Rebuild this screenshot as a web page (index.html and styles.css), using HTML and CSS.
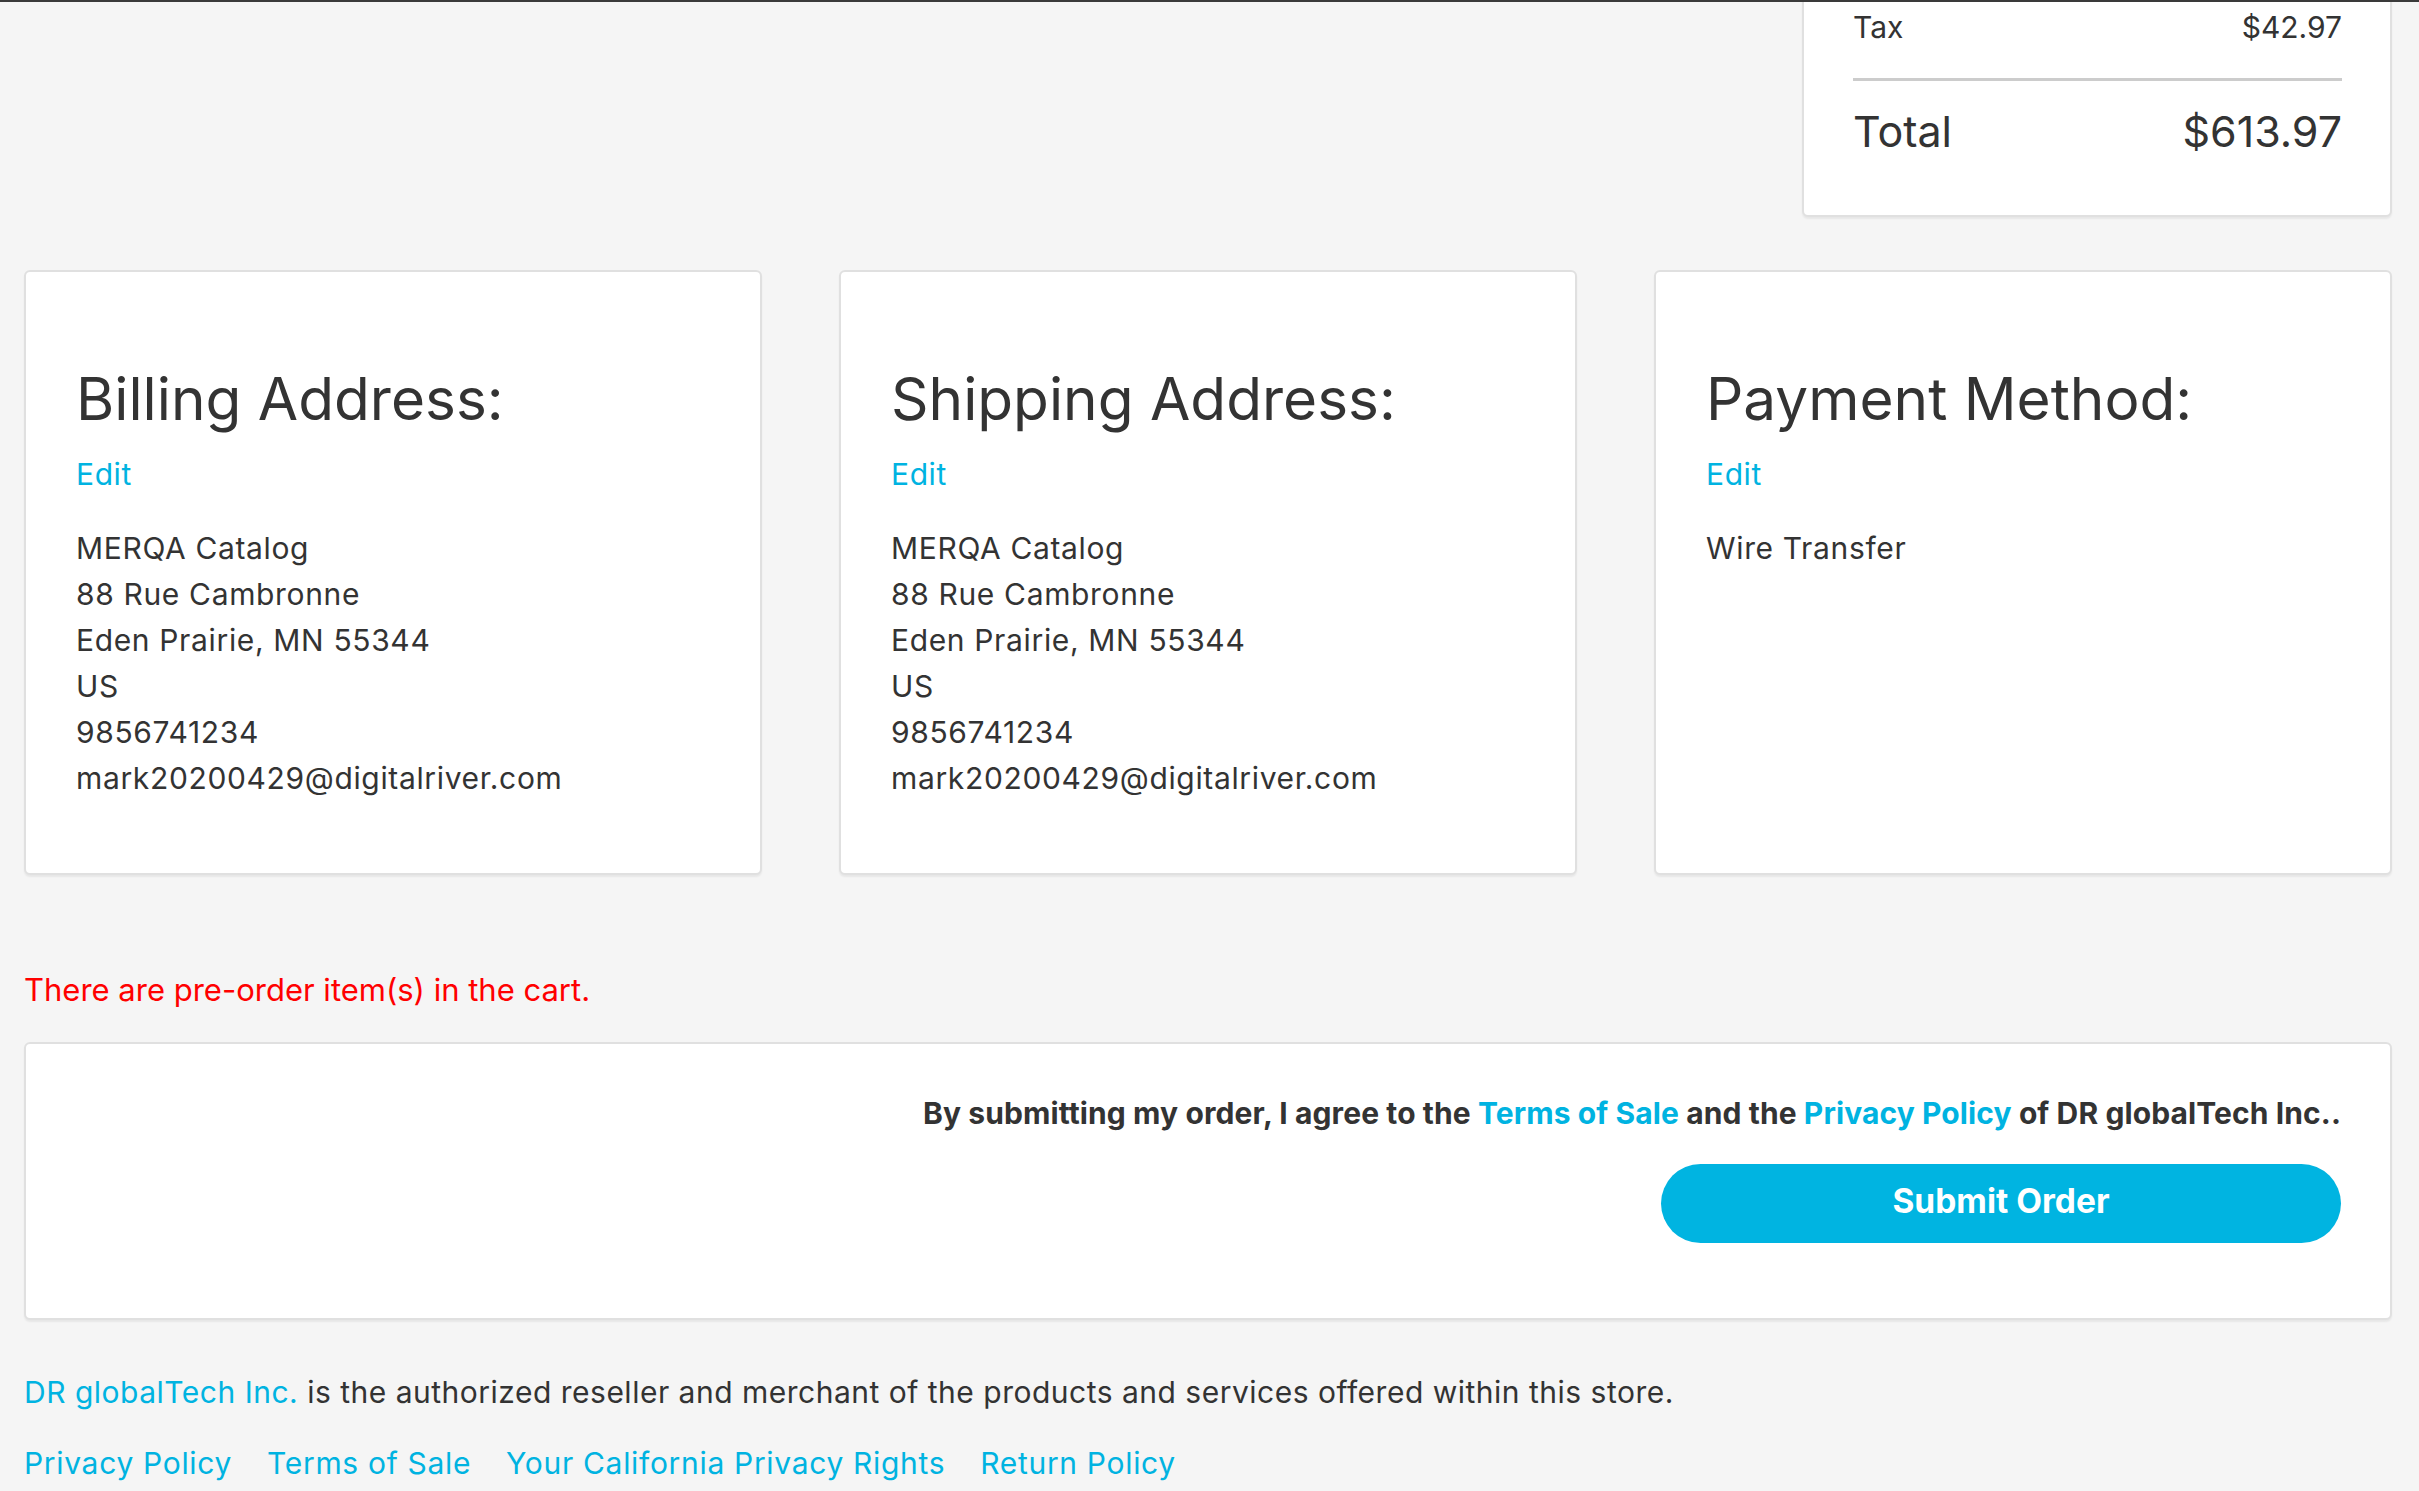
FILE: index.html
```html
<!DOCTYPE html>
<html lang="en">
<head>
<meta charset="utf-8">
<title>Review Order</title>
<link rel="stylesheet" href="styles.css">
</head>
<body>
<div class="topbar"></div>
<main class="page">
  <section class="summary">
    <div class="sum-row tax"><span>Tax</span><span>$42.97</span></div>
    <div class="sum-divider"></div>
    <div class="sum-row total"><span>Total</span><span>$613.97</span></div>
  </section>

  <section class="cards">
    <div class="card">
      <h2 class="card-title">Billing Address:</h2>
      <a class="edit" href="#">Edit</a>
      <div class="card-body">
        <div>MERQA Catalog</div>
        <div>88 Rue Cambronne</div>
        <div>Eden Prairie, MN 55344</div>
        <div>US</div>
        <div>9856741234</div>
        <div>mark20200429@digitalriver.com</div>
      </div>
    </div>
    <div class="card">
      <h2 class="card-title">Shipping Address:</h2>
      <a class="edit" href="#">Edit</a>
      <div class="card-body">
        <div>MERQA Catalog</div>
        <div>88 Rue Cambronne</div>
        <div>Eden Prairie, MN 55344</div>
        <div>US</div>
        <div>9856741234</div>
        <div>mark20200429@digitalriver.com</div>
      </div>
    </div>
    <div class="card">
      <h2 class="card-title">Payment Method:</h2>
      <a class="edit" href="#">Edit</a>
      <div class="card-body">
        <div>Wire Transfer</div>
      </div>
    </div>
  </section>

  <p class="preorder">There are pre-order item(s) in the cart.</p>

  <section class="submit-card">
    <p class="agree">By submitting my order, I agree to the <a href="#">Terms of Sale</a> and the <a href="#">Privacy Policy</a> of DR globalTech Inc..</p>
    <button class="submit-btn" type="button">Submit Order</button>
  </section>

  <footer class="footer">
    <p class="reseller"><a href="#">DR globalTech Inc.</a> is the authorized reseller and merchant of the products and services offered within this store.</p>
    <nav class="footer-links">
      <a href="#">Privacy Policy</a>
      <a href="#">Terms of Sale</a>
      <a href="#">Your California Privacy Rights</a>
      <a href="#">Return Policy</a>
    </nav>
  </footer>
</main>
</body>
</html>
```
FILE: styles.css
```css
* { box-sizing: border-box; }

html, body {
  margin: 0;
  padding: 0;
  background: #f5f5f5;
}

body {
  font-family: Inter, "Noto Sans", "Liberation Sans", sans-serif;
  color: #333333;
  height: 1491px;
  overflow: hidden;
}

a { color: #00b3e1; text-decoration: none; }

.topbar {
  height: 2px;
  background: #3a3a3a;
}

.page {
  padding: 0 27px 0 24px;
  overflow: hidden;
}

/* Order summary (top cut off) */
.summary {
  width: 590px;
  margin: -20px 0 0 auto;
  background: #fff;
  border: 2px solid #e0e0e0;
  border-radius: 6px;
  box-shadow: 0 2px 2px rgba(0,0,0,0.06);
  padding: 25px 48px 58px 49px;
}

.sum-row {
  display: flex;
  justify-content: space-between;
}

.sum-row.tax {
  font-size: 30px;
  line-height: 36px;
}

.sum-divider {
  height: 3px;
  background: #cccccc;
  margin-top: 33px;
}

.sum-row.total {
  margin-top: 24px;
  font-size: 43px;
  line-height: 52px;
}

/* Address / payment cards */
.cards {
  display: grid;
  grid-template-columns: repeat(3, 1fr);
  column-gap: 77px;
  margin-top: 53px;
}

.card {
  background: #fff;
  border: 2px solid #e0e0e0;
  border-radius: 6px;
  box-shadow: 0 2px 2px rgba(0,0,0,0.06);
  min-height: 605px;
  padding: 92px 40px 40px 50px;
}

.card-title {
  margin: 0;
  font-size: 58.5px;
  line-height: 70px;
  font-weight: 400;
}

.edit {
  display: block;
  margin-top: 17px;
  font-size: 30px;
  line-height: 46px;
  letter-spacing: 0.6px;
}

.card-body {
  margin-top: 28px;
  font-size: 30px;
  line-height: 46px;
  letter-spacing: 0.65px;
}

.preorder {
  margin: 92px 0 0;
  color: #ff0000;
  font-size: 31px;
  line-height: 46px;
}

/* Submit card */
.submit-card {
  margin-top: 29px;
  background: #fff;
  border: 2px solid #e0e0e0;
  border-radius: 6px;
  box-shadow: 0 2px 2px rgba(0,0,0,0.06);
  padding: 49px 49px 75px;
  display: flex;
  flex-direction: column;
  align-items: flex-end;
}

.agree {
  margin: 0;
  font-size: 30px;
  line-height: 40px;
  font-weight: 700;
  letter-spacing: 0.1px;
  text-align: right;
}

.submit-btn {
  margin-top: 31px;
  width: 680px;
  height: 79px;
  border: none;
  border-radius: 40px;
  background: #00b4e1;
  color: #fff;
  font-family: inherit;
  font-size: 33.5px;
  font-weight: 700;
  line-height: 1;
  padding: 0 0 4px;
  cursor: pointer;
}

/* Footer */
.footer {
  margin-top: 49px;
}

.reseller {
  margin: 0;
  font-size: 30px;
  line-height: 46px;
  letter-spacing: 0.5px;
}

.footer-links {
  margin-top: 25px;
  display: flex;
  gap: 35px;
  font-size: 30px;
  line-height: 46px;
  letter-spacing: 0.68px;
}
```
